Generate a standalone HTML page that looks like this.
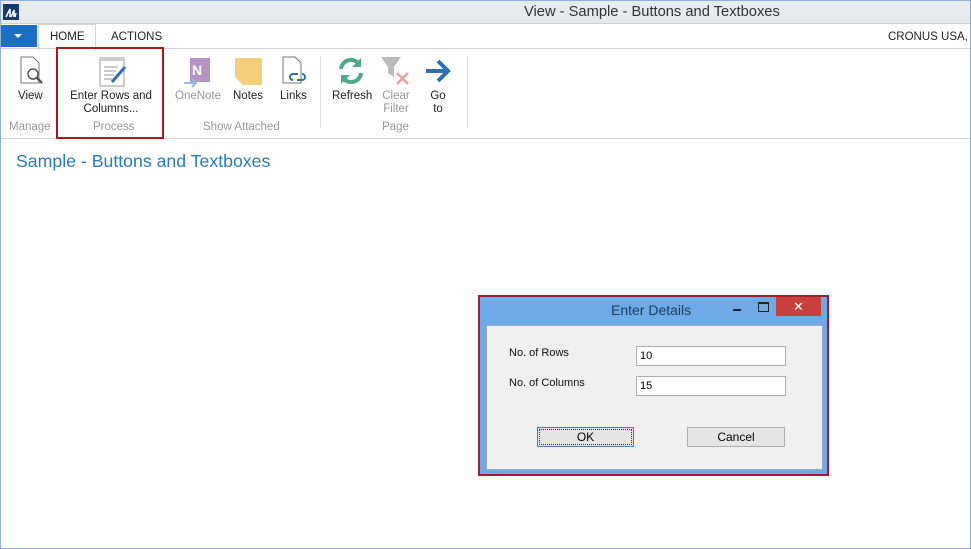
<!DOCTYPE html>
<html><head><style>
body{margin:0;width:971px;height:549px;position:relative;overflow:hidden;background:#fff;font-family:"Liberation Sans",sans-serif;}
.a{position:absolute}
.t{font-size:11.5px;color:#222;text-align:center;white-space:nowrap}
.g{color:#999}
</style></head><body>
<div class="a" style="left:0;top:0;width:971px;height:549px;box-sizing:border-box;border:1px solid #8fb0d8;"></div>
<div class="a" style="left:1px;top:1px;width:969px;height:22px;background:#e9eaeb;border-bottom:1px solid #d0d0d0"></div>
<div class="a" style="left:3px;top:4px;width:16px;height:16px;background:#1b3a6b"></div>
<svg class="a" style="left:3px;top:4px" width="16" height="16"><path d="M3 13 L7 5 L7 13 M8 13 L11 6 L11 13 M12 13 L13 9" stroke="#fff" stroke-width="1.5" fill="none"/></svg>
<div class="a" style="left:524px;top:4px;font-size:14.7px;color:#333">View - Sample - Buttons and Textboxes</div>
<div class="a" style="left:1px;top:25px;width:36px;height:22px;background:#1d6fc4"></div>
<div class="a" style="left:14px;top:34px;width:0;height:0;border-left:4px solid transparent;border-right:4px solid transparent;border-top:4px solid #fff"></div>
<div class="a" style="left:38px;top:24px;width:56px;height:25px;border:1px solid #d4d4d4;border-bottom:none;background:#fff"></div>
<div class="a t" style="left:50px;top:31px;color:#222">HOME</div>
<div class="a t" style="left:111px;top:31px">ACTIONS</div>
<div class="a t" style="left:888px;top:31px">CRONUS USA, I</div>
<div class="a" style="left:1px;top:48px;width:969px;height:1px;background:#d4d4d4"></div>
<div class="a" style="left:1px;top:138px;width:969px;height:1px;background:#d4d4d4"></div>
<svg class="a" style="left:18px;top:56px" width="30" height="32"><path d="M3 1H15L21 7V27H3Z" fill="#fff" stroke="#777"/><circle cx="15" cy="18" r="5" fill="#fff" stroke="#555" stroke-width="1.5"/><path d="M18.5 21.5L24 27" stroke="#555" stroke-width="2.5"/></svg>
<svg class="a" style="left:98px;top:56px" width="32" height="32"><rect x="2" y="2" width="24" height="28" fill="#fff" stroke="#999"/><rect x="2" y="2" width="24" height="3" fill="#ccc"/><path d="M6 11h14M6 15h12M6 19h10M6 23h8" stroke="#999"/><path d="M14 26L27 11" stroke="#2d6fb5" stroke-width="3"/></svg>
<svg class="a" style="left:182px;top:57px" width="32" height="32"><rect x="8" y="1" width="20" height="24" fill="#b694c6"/><text x="10" y="18" font-size="14" font-family="Liberation Sans" font-weight="bold" fill="#fff">N</text><path d="M2 26h12M10 22l4 4-4 4" stroke="#9ab9e0" stroke-width="2" fill="none"/></svg>
<svg class="a" style="left:234px;top:57px" width="30" height="30"><path d="M1 1H28V28H9L1 20Z" fill="#f4cf7a"/></svg>
<svg class="a" style="left:280px;top:56px" width="30" height="32"><path d="M3 1H15L21 7V27H3Z" fill="#fff" stroke="#777"/><path d="M13 24a3 3 0 0 1 0-6h5M22 18a3 3 0 0 1 0 6h-5" stroke="#2d6fb5" stroke-width="2" fill="none"/></svg>
<svg class="a" style="left:336px;top:56px" width="30" height="30"><path d="M5 13a10 10 0 0 1 18-5" stroke="#4ea88a" stroke-width="4" fill="none"/><path d="M25 2v9h-9z" fill="#4ea88a"/><path d="M25 17a10 10 0 0 1-18 5" stroke="#4ea88a" stroke-width="4" fill="none"/><path d="M5 28v-9h9z" fill="#4ea88a"/></svg>
<svg class="a" style="left:380px;top:56px" width="32" height="32"><path d="M1 1h20l-7 10v10l-6-4v-6z" fill="#bbb"/><path d="M17 17l11 11M28 17l-11 11" stroke="#e7a2a2" stroke-width="2.5"/></svg>
<svg class="a" style="left:424px;top:58px" width="30" height="26"><path d="M2 13h22M14 3l10 10-10 10" stroke="#2d6fb5" stroke-width="4" fill="none"/></svg>
<div class="a t" style="left:18px;top:90px">View</div>
<div class="a t" style="left:64px;top:90px;width:94px;line-height:13px">Enter Rows and<br>Columns...</div>
<div class="a t g" style="left:175px;top:90px">OneNote</div>
<div class="a t" style="left:233px;top:90px">Notes</div>
<div class="a t" style="left:280px;top:90px">Links</div>
<div class="a t" style="left:332px;top:90px">Refresh</div>
<div class="a t g" style="left:382px;top:90px;line-height:13px;width:28px">Clear<br>Filter</div>
<div class="a t" style="left:430px;top:90px;line-height:13px;width:16px">Go<br>to</div>
<div class="a t g" style="left:9px;top:121px">Manage</div>
<div class="a t g" style="left:93px;top:121px">Process</div>
<div class="a t g" style="left:203px;top:121px">Show Attached</div>
<div class="a t g" style="left:382px;top:121px">Page</div>
<div class="a" style="left:320px;top:56px;width:1px;height:72px;background:#ddd"></div>
<div class="a" style="left:467px;top:56px;width:1px;height:72px;background:#ddd"></div>
<div class="a" style="left:56px;top:47px;width:108px;height:92px;box-sizing:border-box;border:2px solid #a31c1c"></div>
<div class="a" style="left:16px;top:151px;font-size:17.7px;color:#2a7ab8">Sample - Buttons and Textboxes</div>
<div class="a" style="left:478px;top:295px;width:351px;height:181px;box-sizing:border-box;border:2px solid #a31c2c;background:#6ea9e8"></div>
<div class="a" style="left:611px;top:302px;font-size:14px;color:#1f3b5a">Enter Details</div>
<div class="a" style="left:733px;top:309px;width:8px;height:2px;background:#222"></div>
<div class="a" style="left:758px;top:302px;width:9px;height:7px;border:1px solid #222;border-top-width:2px"></div>
<div class="a" style="left:776px;top:297px;width:45px;height:19px;background:#c9403e;color:#fff;text-align:center;font-size:13px;line-height:19px">✕</div>
<div class="a" style="left:486px;top:325px;width:335px;height:143px;background:#f0f0f0;border:1px solid #9ab"></div>
<div class="a" style="left:509px;top:347px;font-size:11px;color:#111">No. of Rows</div>
<div class="a" style="left:509px;top:377px;font-size:11px;color:#111">No. of Columns</div>
<div class="a" style="left:636px;top:346px;width:148px;height:18px;background:#fff;border:1px solid #abadb3;font-size:11px;line-height:18px;text-indent:3px">10</div>
<div class="a" style="left:636px;top:376px;width:148px;height:18px;background:#fff;border:1px solid #abadb3;font-size:11px;line-height:18px;text-indent:3px">15</div>
<div class="a" style="left:537px;top:427px;width:95px;height:18px;background:#e5e5e5;border:1px solid #3c7fb1;outline:1px dotted #333;outline-offset:-3px;font-size:12px;text-align:center;line-height:18px">OK</div>
<div class="a" style="left:687px;top:427px;width:96px;height:18px;background:#e5e5e5;border:1px solid #adadad;font-size:12px;text-align:center;line-height:18px">Cancel</div>
</body></html>
